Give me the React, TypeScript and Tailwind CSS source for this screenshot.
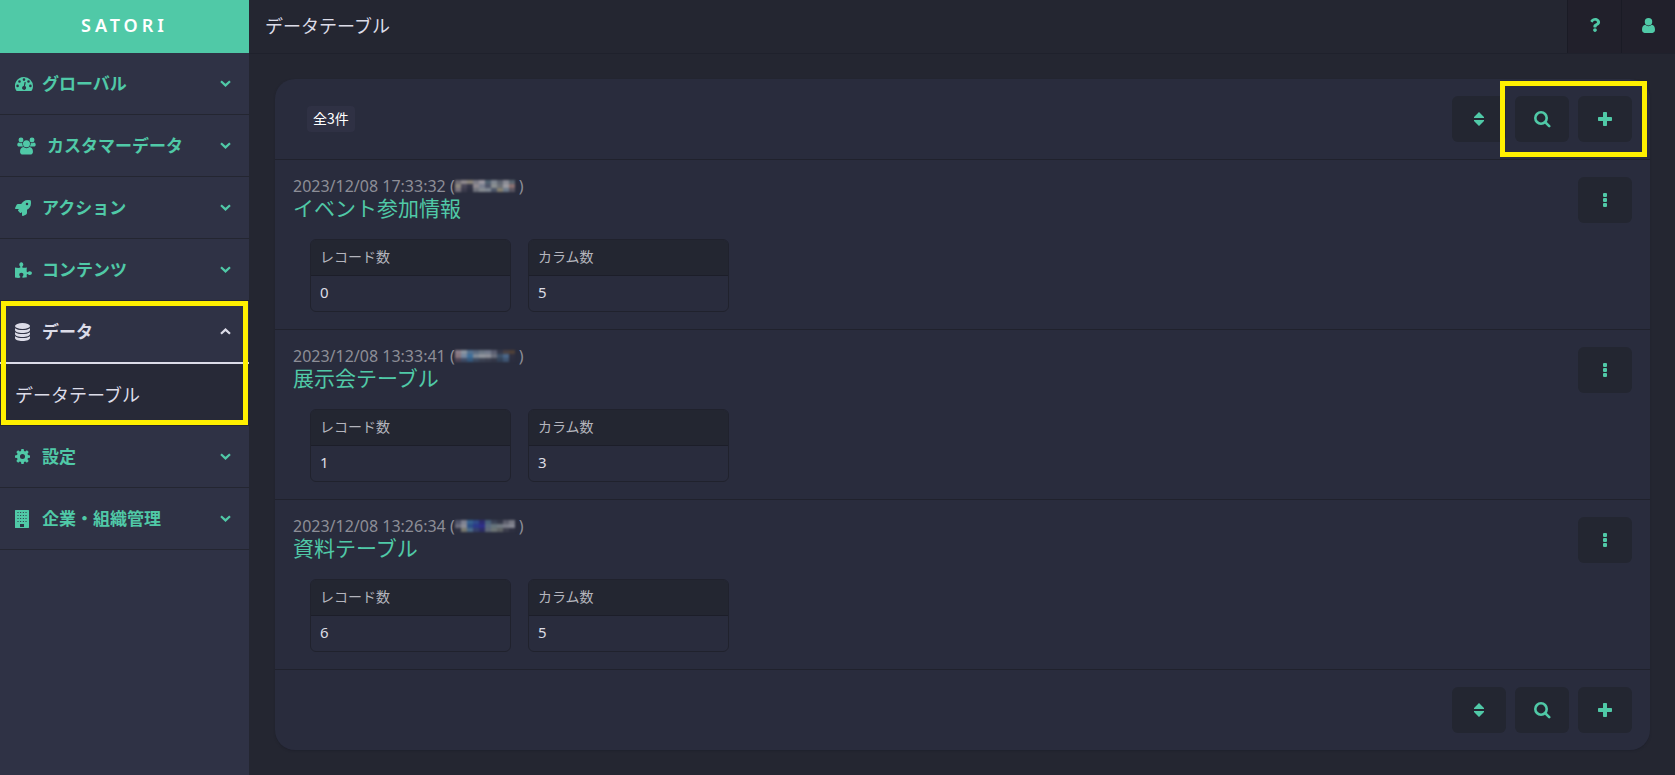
import { FaQuestion, FaRocket } from "react-icons/fa";

interface IconProps {
  className?: string;
}

interface MenuEntry {
  label: string;
  icon: React.ComponentType<IconProps>;
  iconSize: string;
  slot?: string;
  children?: string[];
}

interface DataTable {
  name: string;
  updatedAt: string;
  records: number;
  columns: number;
  mosaic: string[][];
}

// Icons
const GaugeIcon = ({ className }: IconProps) => (
  <svg viewBox="0 0 18 14" className={className} fill="currentColor" aria-hidden="true">
    <path
      fillRule="evenodd"
      d="M9 0a9 9 0 0 1 9 9c0 1.700-.45 3.300-1.200 4.600-.15.250-.4.400-.7.400H1.900c-.3 0-.55-.15-.7-.4A9 9 0 0 1 9 0zM2.600 7.600a1.300 1.300 0 1 0 0 2.600 1.300 1.300 0 0 0 0-2.600zM4.500 3.200a1.300 1.300 0 1 0 0 2.600 1.300 1.300 0 0 0 0-2.600zM9 1.300a1.300 1.300 0 1 0 0 2.600 1.300 1.300 0 0 0 0-2.600zM13.500 3.200a1.300 1.300 0 1 0 0 2.600 1.300 1.300 0 0 0 0-2.600zM15.400 7.600a1.300 1.300 0 1 0 0 2.600 1.300 1.300 0 0 0 0-2.600zM9.600 5l-.8 3.900a2 2 0 1 0 1.200.2l.8-3.800z"
    />
  </svg>
);

const GroupIcon = ({ className }: IconProps) => (
  <svg viewBox="0 0 20 18" className={className} fill="currentColor" aria-hidden="true">
    <circle cx="4.200" cy="2.700" r="2.600" />
    <circle cx="15.800" cy="2.700" r="2.600" />
    <path d="M2.200 5.200c.6.500 1.300.8 2 .8.500 0 1-.1 1.400-.3-.2 1.600.2 2.900 1.200 3.900H2.400C1 9.600.3 8.900.3 7.700c0-1.200.6-2.300 1.900-2.500zM17.800 5.200c-.6.500-1.300.8-2 .8-.5 0-1-.1-1.400-.3.200 1.600-.2 2.900-1.200 3.900h4.400c1.400 0 2.100-.7 2.100-1.900 0-1.200-.6-2.300-1.900-2.500z" />
    <circle cx="10" cy="6.700" r="3.700" />
    <path d="M6.800 10.100c.9.800 2 1.200 3.200 1.200s2.300-.4 3.200-1.200c2.300.1 3.600 2.200 3.600 4.900 0 1.900-1.100 3-2.900 3H6.100c-1.800 0-2.900-1.100-2.900-3 0-2.700 1.300-4.800 3.600-4.900z" />
  </svg>
);

const PuzzleIcon = ({ className }: IconProps) => (
  <svg viewBox="0 0 17 16" className={className} fill="currentColor" aria-hidden="true">
    <path d="M0 5.500c1.600.3 3.200.5 4.700.3.700-.1.900-.6.500-1.200-.4-.6-.9-1-.9-2C4.300 1.100 5.100.2 6.300.2s2 .9 2 2.400c0 1-.5 1.400-.9 2-.4.600-.1 1.100.6 1.200 1.200.1 2.600-.1 3.900-.3-.2 1.400-.4 2.800-.2 4 .1.700.6.900 1.200.5.600-.4 1-.8 1.900-.8 1.300 0 2.100.7 2.100 1.900s-.8 2-2.100 2c-.9 0-1.300-.4-1.900-.8-.6-.4-1.100-.2-1.200.5-.1.900 0 1.700.2 2.500-1.300.3-2.700.5-4 .5-.6-.1-.8-.6-.4-1.200.4-.5.900-1 .9-1.900 0-1.200-.8-1.900-2.100-1.900-1.200 0-2 .7-2 1.900 0 .9.500 1.400.9 1.900.3.600.1 1.100-.5 1.200C3.100 16 1.500 15.800 0 15.500z" />
  </svg>
);

const DatabaseIcon = ({ className }: IconProps) => (
  <svg viewBox="0 0 15 18" className={className} fill="currentColor" aria-hidden="true">
    <ellipse cx="7.500" cy="3" rx="7.500" ry="3" />
    <path d="M0 5.200c1.600 1.300 4.400 1.900 7.500 1.900s5.900-.6 7.500-1.900v1.700c0 1.700-3.400 3-7.500 3s-7.500-1.300-7.500-3z" />
    <path d="M0 9.200c1.600 1.300 4.400 1.900 7.500 1.900s5.900-.6 7.500-1.900v1.700c0 1.700-3.400 3-7.500 3s-7.500-1.300-7.500-3z" />
    <path d="M0 13.200c1.600 1.300 4.400 1.900 7.500 1.900s5.900-.6 7.500-1.900V15c0 1.700-3.400 3-7.500 3S0 16.700 0 15z" />
  </svg>
);

const GearIcon = ({ className }: IconProps) => (
  <svg viewBox="0 0 16 16" className={className} fill="currentColor" aria-hidden="true">
    <path
      fillRule="evenodd"
      d="M6.800 0h2.400l.4 2.200 1.300.5 1.800-1.300 1.900 1.900-1.300 1.800.5 1.300 2.200.4v2.400l-2.200.4-.5 1.300 1.300 1.800-1.900 1.900-1.800-1.300-1.300.5-.4 2.200H6.800l-.4-2.200-1.300-.5-1.800 1.300-1.900-1.900 1.300-1.800-.5-1.300L0 9.200V6.800l2.200-.4.500-1.300-1.300-1.800 1.900-1.900 1.800 1.300 1.300-.5zM8 5.300a2.700 2.700 0 1 0 0 5.400 2.700 2.700 0 0 0 0-5.400z"
    />
  </svg>
);

const BuildingIcon = ({ className }: IconProps) => (
  <svg viewBox="0 0 14 18" className={className} fill="currentColor" aria-hidden="true">
    <path
      fillRule="evenodd"
      d="M.5 0h13c.3 0 .5.200.5.500v17c0 .3-.2.500-.5.500H.5a.5.500 0 0 1-.5-.5V.5C0 .2.200 0 .5 0zM5 14v3h4v-3z"
    />
    <path
      d="M2.500 2.500h10M2.500 5.500h10M2.500 8.500h10M2.500 11.500h10"
      className="stroke-[#2f3245]"
      strokeWidth="1"
      strokeDasharray="1 1.670"
    />
  </svg>
);

const ChevronIcon = ({ className }: IconProps) => (
  <svg viewBox="0 0 11 7" className={className} fill="none" stroke="currentColor" strokeWidth="2.200" aria-hidden="true">
    <path d="M1 1.200l4.500 4.200L10 1.200" />
  </svg>
);

const UserIcon = ({ className }: IconProps) => (
  <svg viewBox="0 0 14 16" className={className} fill="currentColor" aria-hidden="true">
    <circle cx="7" cy="4" r="4" />
    <path d="M3.600 7.300c.9.900 2.100 1.500 3.400 1.500s2.500-.6 3.400-1.500c2.400.2 3.600 2.400 3.600 5.400 0 1.900-1.100 3.300-2.700 3.300H2.700C1.100 16 0 14.600 0 12.700c0-3 1.200-5.200 3.600-5.400z" />
  </svg>
);

const SearchIcon = ({ className }: IconProps) => (
  <svg viewBox="0 0 17 17" className={className} fill="none" stroke="currentColor" aria-hidden="true">
    <circle cx="7" cy="7" r="5.700" strokeWidth="2.600" />
    <path d="M11.200 11.200l4 4" strokeWidth="2.600" strokeLinecap="round" />
  </svg>
);

const SortIcon = ({ className }: IconProps) => (
  <svg viewBox="0 0 10 14" className={className} fill="currentColor" aria-hidden="true">
    <path d="M5 0l5 5v1H0V5zM5 14l5-5V8H0v1z" />
  </svg>
);

const PlusIcon = ({ className }: IconProps) => (
  <svg viewBox="0 0 14 14" className={className} fill="currentColor" aria-hidden="true">
    <path d="M6 0h2c.6 0 1 .4 1 1v4h4c.6 0 1 .4 1 1v2c0 .6-.4 1-1 1H9v4c0 .6-.4 1-1 1H6c-.6 0-1-.4-1-1V9H1c-.6 0-1-.4-1-1V6c0-.6.4-1 1-1h4V1c0-.6.400-1 1-1z" />
  </svg>
);

const DotsIcon = ({ className }: IconProps) => (
  <svg viewBox="0 0 4 14" className={className} fill="currentColor" aria-hidden="true">
    <rect width="4" height="4" rx="1" />
    <rect y="5" width="4" height="4" rx="1" />
    <rect y="10" width="4" height="4" rx="1" />
  </svg>
);

const menu: MenuEntry[] = [
  { label: "グローバル", icon: GaugeIcon, iconSize: "w-[18px] h-[14px]" },
  { label: "カスタマーデータ", icon: GroupIcon, iconSize: "w-[19px] h-[18px]", slot: "w-[21px] justify-end" },
  { label: "アクション", icon: FaRocket, iconSize: "w-4 h-4" },
  { label: "コンテンツ", icon: PuzzleIcon, iconSize: "w-[17px] h-4" },
  { label: "データ", icon: DatabaseIcon, iconSize: "w-[15px] h-[18px]", children: ["データテーブル"] },
  { label: "設定", icon: GearIcon, iconSize: "w-[15px] h-[15px]" },
  { label: "企業・組織管理", icon: BuildingIcon, iconSize: "w-[14px] h-[18px]" },
];

const tables: DataTable[] = [
  {
    name: "イベント参加情報",
    updatedAt: "2023/12/08 17:33:32",
    records: 0,
    columns: 5,
    mosaic: [
      ["#6f6c74", "#8f8a8c", "#8a8478", "#7c7c86", "#9a97a0", "#50606f", "#7f8690", "#5e6470", "#8a8b94", "#5a6670"],
      ["#8d8880", "#4a4858", "#343648", "#8f8a90", "#7a8090", "#50566a", "#8a8f90", "#6b7078", "#9a9aa0", "#8a7070"],
      ["#77727a", "#3c3c4c", "#2c2e3f", "#70737c", "#858a90", "#7e8690", "#4c5568", "#85806f", "#6c7a8a", "#5a5560"],
    ],
  },
  {
    name: "展示会テーブル",
    updatedAt: "2023/12/08 13:33:41",
    records: 1,
    columns: 3,
    mosaic: [
      ["#8a7c88", "#8a94a0", "#52708f", "#5a6a80", "#6b7684", "#70788a", "#5a5e70", "#34384a", "#4a4244", "#4f4038"],
      ["#86747c", "#7788a0", "#3f6f9a", "#7f8a98", "#8f949c", "#8c8f98", "#6a6e7c", "#3d5068", "#4a6688", "#2f3040"],
      ["#4d4454", "#3f4c66", "#34587c", "#3c4a60", "#3c4252", "#3a3e4e", "#343848", "#324258", "#3e5470", "#2c2e3f"],
    ],
  },
  {
    name: "資料テーブル",
    updatedAt: "2023/12/08 13:26:34",
    records: 6,
    columns: 5,
    mosaic: [
      ["#50546a", "#7c8090", "#34608f", "#2f4a88", "#2c2c70", "#48607a", "#3c4456", "#343848", "#5c5e6c", "#777984"],
      ["#6a6c7c", "#8a8c96", "#2b4f86", "#2b3a8a", "#2e2e88", "#5a6a80", "#66747c", "#707880", "#7a7c88", "#858792"],
      ["#2f3142", "#77786f", "#4a6a88", "#34406c", "#2c2e66", "#5e6878", "#6c7474", "#5e6264", "#3c3e4c", "#2f3142"],
    ],
  },
];

const MaskedName = ({ rows }: { rows: string[][] }) => (
  <svg viewBox="0 0 60 14" className="w-[60px] h-[14px] mr-1 blur-[1px]" aria-hidden="true">
    {rows.map((colors, row) =>
      colors.map((color, col) => (
        <rect key={`${row}-${col}`} x={col * 6} y={1 + row * 4} width="6" height="4" fill={color} />
      ))
    )}
  </svg>
);

const Highlight = ({ className }: { className: string }) => (
  <div className={`absolute z-10 border-5 border-[#fff000] pointer-events-none ${className}`} />
);

const buttonStyle =
  "flex items-center justify-center w-[54px] h-[46px] rounded-md bg-[#232631] text-[#50c9a7] cursor-pointer";

const topButtonStyle =
  "flex items-center justify-center w-[54px] pb-[3px] bg-[#21202b] border-l border-[#1a1b25] text-[#50c9a7] cursor-pointer";

const Toolbar = ({ highlighted }: { highlighted?: boolean }) => (
  <div className="flex gap-[9px]">
    <button type="button" aria-label="並び替え" className={buttonStyle}>
      <SortIcon className="w-[10px] h-[14px]" />
    </button>
    <div className="relative flex gap-[9px]">
      <button type="button" aria-label="検索" className={buttonStyle}>
        <SearchIcon className="w-[17px] h-[17px]" />
      </button>
      <button type="button" aria-label="追加" className={buttonStyle}>
        <PlusIcon className="w-[14px] h-[14px]" />
      </button>
      {highlighted && <Highlight className="-inset-[15px]" />}
    </div>
  </div>
);

const StatTable = ({ label, value }: { label: string; value: number }) => (
  <table className="w-[201px] border-separate border-spacing-0 rounded-md border border-[#20222d] overflow-hidden text-left">
    <thead>
      <tr>
        <th className="h-[36px] px-[9px] pb-[3px] bg-[#232631] border-b border-[#1c1e29] text-sm font-normal text-[#b4b5bd]">
          {label}
        </th>
      </tr>
    </thead>
    <tbody>
      <tr>
        <td className="h-[35px] px-[9px] pb-[3px] font-['Noto_Sans',sans-serif] text-[15px] leading-5 text-[#dcdce4]">
          {value}
        </td>
      </tr>
    </tbody>
  </table>
);

const Sidebar = () => (
  <aside className="w-[249px] shrink-0 bg-[#2f3245]">
    <a
      href="#"
      className="flex items-center justify-center h-[53px] pb-[3px] bg-[#50c9a7] font-['Noto_Sans',sans-serif] text-lg font-semibold tracking-[4px] text-white"
    >
      SATORI
    </a>
    <nav>
      {menu.map((entry) => {
        const open = Boolean(entry.children);
        return (
          <div key={entry.label} className="relative">
            <button
              type="button"
              aria-expanded={open}
              className={`flex items-center w-full pl-[15px] pr-[18px] text-[17px] font-bold cursor-pointer ${
                open
                  ? "h-[63px] border-b-2 border-[#dcdce8] text-[#dcdce8]"
                  : "h-[62px] border-b border-[#242631] text-[#50c9a7]"
              }`}
            >
              <span className={`flex items-center shrink-0 mr-[11px] ${entry.slot ?? "w-4"}`}>
                <entry.icon className={`shrink-0 ${entry.iconSize}`} />
              </span>
              <span className="pb-[2px]">{entry.label}</span>
              <ChevronIcon className={`ml-auto w-[11px] h-[7px] ${open ? "rotate-180" : ""}`} />
            </button>
            {entry.children?.map((child) => (
              <a
                key={child}
                href="#"
                className="flex items-center h-[62px] px-[15px] pb-[2px] bg-[#272937] border-b border-[#242631] text-lg text-[#dcdce8]"
              >
                {child}
              </a>
            ))}
            {open && <Highlight className="inset-x-px top-0 bottom-px" />}
          </div>
        );
      })}
    </nav>
  </aside>
);

export default function App() {
  return (
    <div className="flex min-h-screen bg-[#242631] font-['Noto_Sans_CJK_JP',sans-serif] text-[#dcdce8]">
      <Sidebar />

      <div className="flex-1 min-w-0">
        {/* Top bar */}
        <header className="flex h-[54px] border-b border-[#1f212c] pl-4">
          <h1 className="flex items-center flex-1 pb-[4px] text-lg">データテーブル</h1>
          <button type="button" aria-label="ヘルプ" className={topButtonStyle}>
            <FaQuestion className="w-[14px] h-[14px]" />
          </button>
          <button type="button" aria-label="アカウント" className={topButtonStyle}>
            <UserIcon className="w-[13px] h-[15px]" />
          </button>
        </header>

        {/* Table list */}
        <main className="mt-[25px] ml-[26px] mr-[25px] mb-6 rounded-[20px] bg-[#292c3d] shadow-[0_1px_2px_#1f212c]">
          <div className="flex items-center justify-between h-[81px] pl-8 pr-[18px] border-b border-[#20222d]">
            <span className="px-[6px] pb-px leading-[25px] rounded-sm bg-[#2f3144] text-sm text-white">全3件</span>
            <Toolbar highlighted />
          </div>

          {tables.map((table) => (
            <section key={table.name} className="flex justify-between h-[170px] px-[18px] py-[17px] border-b border-[#20222d]">
              <div>
                <p className="flex items-center font-['Noto_Sans',sans-serif] text-base leading-[18px] text-[#8d8e97]">
                  {table.updatedAt} (
                  <MaskedName rows={table.mosaic} />
                  )
                </p>
                <h2 className="font-['Liberation_Sans','Noto_Sans_CJK_JP',sans-serif] text-[21px] leading-7 text-[#50c9a7]">
                  <a href="#" className="block">
                    {table.name}
                  </a>
                </h2>
                <div className="flex gap-[17px] mt-4 ml-[17px]">
                  <StatTable label="レコード数" value={table.records} />
                  <StatTable label="カラム数" value={table.columns} />
                </div>
              </div>
              <button type="button" aria-label="メニュー" className={buttonStyle}>
                <DotsIcon className="w-1 h-[14px]" />
              </button>
            </section>
          ))}

          <div className="flex items-center justify-end h-20 pr-[18px]">
            <Toolbar />
          </div>
        </main>
      </div>
    </div>
  );
}
